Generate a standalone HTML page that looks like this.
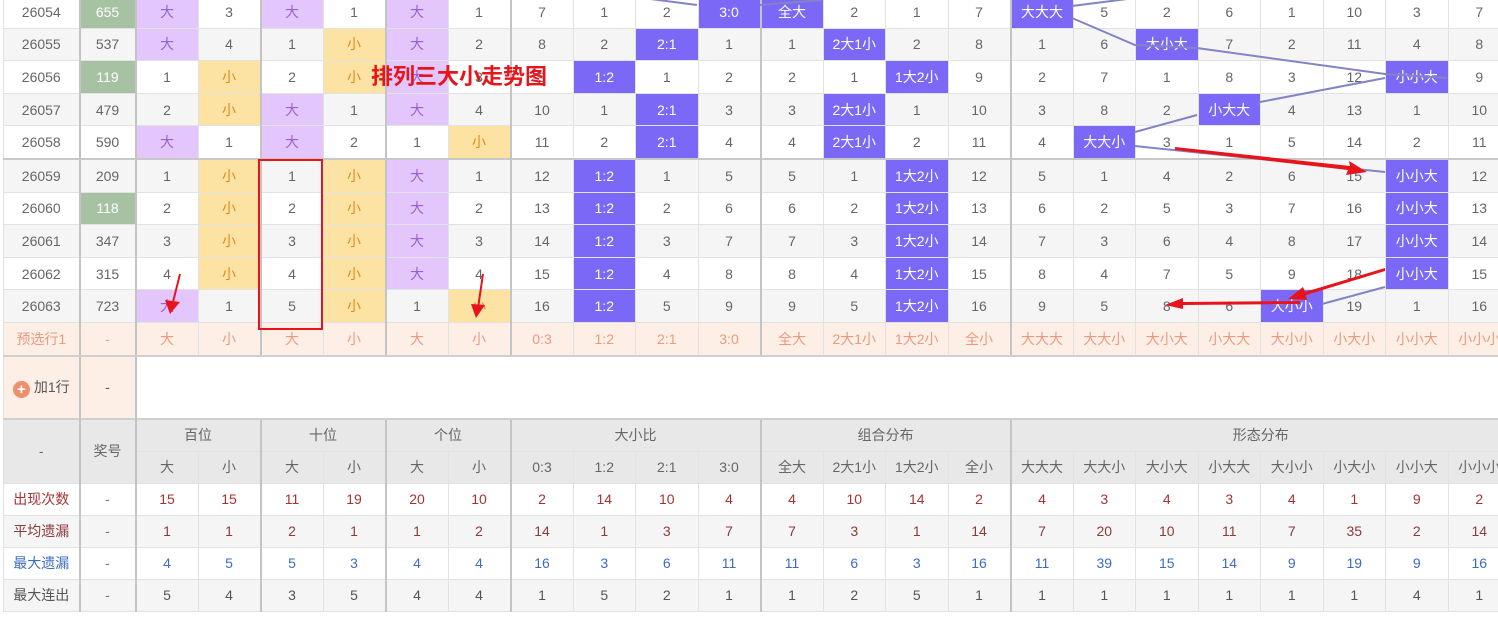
<!DOCTYPE html>
<html><head><meta charset="utf-8"><style>
body{margin:0;width:1498px;height:619px;overflow:hidden;background:#fff;position:relative;font-family:"Liberation Sans","Noto Sans CJK SC",sans-serif;}
table{position:absolute;left:3px;top:-5px;border-collapse:collapse;table-layout:fixed;width:1632px;font-size:14px;color:#666;}
td{border:1px solid #e2e2e2;text-align:center;padding:0;height:31.6px;white-space:nowrap;overflow:hidden;}
tr.a td{background:#f5f5f5}
tr.top td{border-top:2px solid #c8c8c8}
td.g{border-left:2px solid #c4c4c4}
tr td.d{background:#e2c6fc;color:#9a5fd0}
tr td.x{background:#fde3a3;color:#e08a1e}
tr td.b{background:#7b68f7;color:#fff}
tr td.n{background:#a7c2a3;color:#fff}
tr.p td{background:#fdeee6;color:#eb9a80;border-bottom:2px solid #d0d0d0}
tr.add td{height:61px}
tr.add td.pk{background:#fdeee6;color:#555}
tr.h td{background:#e8e8e8;color:#666;height:31px}
tr.h td.bb{border-top:2px solid #cfcfcf}
tr.s td{height:31px}
.c1 td{color:#a83232}.c2 td{color:#8b3b3b}.c3 td{color:#3d6cc0}.c4 td{color:#555}
tr.s td.m{color:#777}
.plus{display:inline-block;width:17px;height:17px;border-radius:50%;background:#ef8f6c;color:#fff;font-weight:bold;line-height:17px;font-size:15px;vertical-align:-2px;margin-right:4px}
</style></head><body>
<table>
<colgroup><col style="width:76px"><col style="width:56px"><col span="24" style="width:62.5px"></colgroup>
<tr><td>26054</td><td class="g n">655</td><td class="g d">大</td><td>3</td><td class="g d">大</td><td>1</td><td class="g d">大</td><td>1</td><td class="g">7</td><td>1</td><td>2</td><td class="b">3:0</td><td class="g b">全大</td><td>2</td><td>1</td><td>7</td><td class="g b">大大大</td><td>5</td><td>2</td><td>6</td><td>1</td><td>10</td><td>3</td><td>7</td><td></td><td></td></tr>
<tr class="a"><td>26055</td><td class="g">537</td><td class="g d">大</td><td>4</td><td class="g">1</td><td class="x">小</td><td class="g d">大</td><td>2</td><td class="g">8</td><td>2</td><td class="b">2:1</td><td>1</td><td class="g">1</td><td class="b">2大1小</td><td>2</td><td>8</td><td class="g">1</td><td>6</td><td class="b">大小大</td><td>7</td><td>2</td><td>11</td><td>4</td><td>8</td><td></td><td></td></tr>
<tr><td>26056</td><td class="g n">119</td><td class="g">1</td><td class="x">小</td><td class="g">2</td><td class="x">小</td><td class="g d">大</td><td>3</td><td class="g">9</td><td class="b">1:2</td><td>1</td><td>2</td><td class="g">2</td><td>1</td><td class="b">1大2小</td><td>9</td><td class="g">2</td><td>7</td><td>1</td><td>8</td><td>3</td><td>12</td><td class="b">小小大</td><td>9</td><td></td><td></td></tr>
<tr class="a"><td>26057</td><td class="g">479</td><td class="g">2</td><td class="x">小</td><td class="g d">大</td><td>1</td><td class="g d">大</td><td>4</td><td class="g">10</td><td>1</td><td class="b">2:1</td><td>3</td><td class="g">3</td><td class="b">2大1小</td><td>1</td><td>10</td><td class="g">3</td><td>8</td><td>2</td><td class="b">小大大</td><td>4</td><td>13</td><td>1</td><td>10</td><td></td><td></td></tr>
<tr><td>26058</td><td class="g">590</td><td class="g d">大</td><td>1</td><td class="g d">大</td><td>2</td><td class="g">1</td><td class="x">小</td><td class="g">11</td><td>2</td><td class="b">2:1</td><td>4</td><td class="g">4</td><td class="b">2大1小</td><td>2</td><td>11</td><td class="g">4</td><td class="b">大大小</td><td>3</td><td>1</td><td>5</td><td>14</td><td>2</td><td>11</td><td></td><td></td></tr>
<tr class="a top"><td>26059</td><td class="g">209</td><td class="g">1</td><td class="x">小</td><td class="g">1</td><td class="x">小</td><td class="g d">大</td><td>1</td><td class="g">12</td><td class="b">1:2</td><td>1</td><td>5</td><td class="g">5</td><td>1</td><td class="b">1大2小</td><td>12</td><td class="g">5</td><td>1</td><td>4</td><td>2</td><td>6</td><td>15</td><td class="b">小小大</td><td>12</td><td></td><td></td></tr>
<tr><td>26060</td><td class="g n">118</td><td class="g">2</td><td class="x">小</td><td class="g">2</td><td class="x">小</td><td class="g d">大</td><td>2</td><td class="g">13</td><td class="b">1:2</td><td>2</td><td>6</td><td class="g">6</td><td>2</td><td class="b">1大2小</td><td>13</td><td class="g">6</td><td>2</td><td>5</td><td>3</td><td>7</td><td>16</td><td class="b">小小大</td><td>13</td><td></td><td></td></tr>
<tr class="a"><td>26061</td><td class="g">347</td><td class="g">3</td><td class="x">小</td><td class="g">3</td><td class="x">小</td><td class="g d">大</td><td>3</td><td class="g">14</td><td class="b">1:2</td><td>3</td><td>7</td><td class="g">7</td><td>3</td><td class="b">1大2小</td><td>14</td><td class="g">7</td><td>3</td><td>6</td><td>4</td><td>8</td><td>17</td><td class="b">小小大</td><td>14</td><td></td><td></td></tr>
<tr><td>26062</td><td class="g">315</td><td class="g">4</td><td class="x">小</td><td class="g">4</td><td class="x">小</td><td class="g d">大</td><td>4</td><td class="g">15</td><td class="b">1:2</td><td>4</td><td>8</td><td class="g">8</td><td>4</td><td class="b">1大2小</td><td>15</td><td class="g">8</td><td>4</td><td>7</td><td>5</td><td>9</td><td>18</td><td class="b">小小大</td><td>15</td><td></td><td></td></tr>
<tr class="a"><td>26063</td><td class="g">723</td><td class="g d">大</td><td>1</td><td class="g">5</td><td class="x">小</td><td class="g">1</td><td class="x">小</td><td class="g">16</td><td class="b">1:2</td><td>5</td><td>9</td><td class="g">9</td><td>5</td><td class="b">1大2小</td><td>16</td><td class="g">9</td><td>5</td><td>8</td><td>6</td><td class="b">大小小</td><td>19</td><td>1</td><td>16</td><td></td><td></td></tr>
<tr class="p"><td>预选行1</td><td class="g">-</td><td class="g">大</td><td>小</td><td class="g">大</td><td>小</td><td class="g">大</td><td>小</td><td class="g">0:3</td><td>1:2</td><td>2:1</td><td>3:0</td><td class="g">全大</td><td>2大1小</td><td>1大2小</td><td>全小</td><td class="g">大大大</td><td>大大小</td><td>大小大</td><td>小大大</td><td>大小小</td><td>小大小</td><td>小小大</td><td>小小小</td><td></td><td></td></tr>
<tr class="add"><td class="pk"><span class="plus">+</span>加1行</td><td class="pk g">-</td><td class="g" colspan="24" style="border-right:none"></td></tr>
<tr class="h"><td rowspan="2" class="bb">-</td><td rowspan="2" class="g bb">奖号</td><td colspan="2" class="g bb">百位</td><td colspan="2" class="g bb">十位</td><td colspan="2" class="g bb">个位</td><td colspan="4" class="g bb">大小比</td><td colspan="4" class="g bb">组合分布</td><td colspan="8" class="g bb">形态分布</td><td colspan="2" class="bb"></td></tr>
<tr class="h"><td class="g">大</td><td>小</td><td class="g">大</td><td>小</td><td class="g">大</td><td>小</td><td class="g">0:3</td><td>1:2</td><td>2:1</td><td>3:0</td><td class="g">全大</td><td>2大1小</td><td>1大2小</td><td>全小</td><td class="g">大大大</td><td>大大小</td><td>大小大</td><td>小大大</td><td>大小小</td><td>小大小</td><td>小小大</td><td>小小小</td><td></td><td></td></tr>
<tr class="s c1"><td>出现次数</td><td class="g m">-</td><td class="g">15</td><td>15</td><td class="g">11</td><td>19</td><td class="g">20</td><td>10</td><td class="g">2</td><td>14</td><td>10</td><td>4</td><td class="g">4</td><td>10</td><td>14</td><td>2</td><td class="g">4</td><td>3</td><td>4</td><td>3</td><td>4</td><td>1</td><td>9</td><td>2</td><td></td><td></td></tr>
<tr class="s c2 a"><td>平均遗漏</td><td class="g m">-</td><td class="g">1</td><td>1</td><td class="g">2</td><td>1</td><td class="g">1</td><td>2</td><td class="g">14</td><td>1</td><td>3</td><td>7</td><td class="g">7</td><td>3</td><td>1</td><td>14</td><td class="g">7</td><td>20</td><td>10</td><td>11</td><td>7</td><td>35</td><td>2</td><td>14</td><td></td><td></td></tr>
<tr class="s c3"><td>最大遗漏</td><td class="g m">-</td><td class="g">4</td><td>5</td><td class="g">5</td><td>3</td><td class="g">4</td><td>4</td><td class="g">16</td><td>3</td><td>6</td><td>11</td><td class="g">11</td><td>6</td><td>3</td><td>16</td><td class="g">11</td><td>39</td><td>15</td><td>14</td><td>9</td><td>19</td><td>9</td><td>16</td><td></td><td></td></tr>
<tr class="s c4 a"><td>最大连出</td><td class="g m">-</td><td class="g">5</td><td>4</td><td class="g">3</td><td>5</td><td class="g">4</td><td>4</td><td class="g">1</td><td>5</td><td>2</td><td>1</td><td class="g">1</td><td>2</td><td>5</td><td>1</td><td class="g">1</td><td>1</td><td>1</td><td>1</td><td>1</td><td>1</td><td>4</td><td>1</td><td></td><td></td></tr>
</table>
<svg width="1498" height="619" style="position:absolute;left:0;top:0" xmlns="http://www.w3.org/2000/svg">
<g stroke="#8383c6" stroke-width="2" fill="none">
<polyline points="1072,6 1135,-2"/>
<polyline points="1072,18 1135,45 1197,48 1385,74 1447,78"/>
<polyline points="1385,78 1260,102 1258,105"/>
<polyline points="1197,115 1135,132"/>
<polyline points="1135,146 1385,172"/>
<polyline points="1385,287 1322,304"/>
<polyline points="635,-3 697,5"/><polyline points="760,5 822,0"/>
</g>
<g fill="#e8141c" stroke="#e8141c">
<line x1="180" y1="274" x2="172" y2="306" stroke-width="2"/><polygon points="165,300 180,302 170,314" stroke="none"/>
<line x1="483" y1="274" x2="478" y2="308" stroke-width="2"/><polygon points="471,304 485,305 476,318" stroke="none"/>
<polygon points="1175,147 1350,166 1349,161 1367,172 1346,175 1348,170 1175,150" stroke="none"/>
<polygon points="1385,268 1305,292 1303,287 1288,299 1307,300 1306,295 1385,271" stroke="none"/>
<polygon points="1300,301 1183,302 1183,298 1165,305 1183,309 1183,305 1300,304" stroke="none"/>
</g>
<rect x="259" y="160" width="63" height="169" fill="none" stroke="#e8141c" stroke-width="2"/>
<text x="371" y="84" font-family="Liberation Sans,Noto Sans CJK SC,sans-serif" font-size="22" font-weight="bold" fill="#e8141c">排列三大小走势图</text>
</svg>
</body></html>
